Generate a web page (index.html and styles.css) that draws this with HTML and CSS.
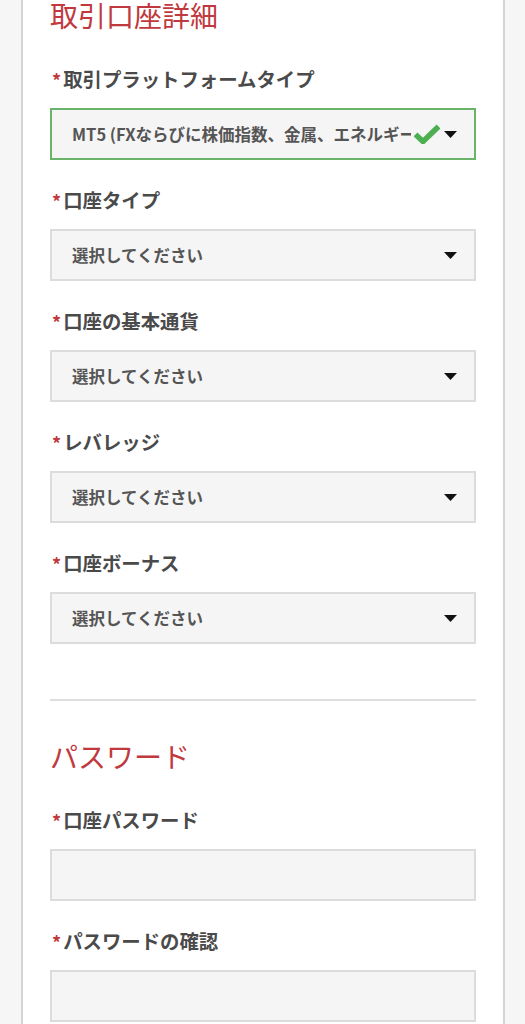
FILE: index.html
```html
<!DOCTYPE html>
<html lang="ja">
<head>
<meta charset="utf-8">
<title>取引口座詳細</title>
<link rel="stylesheet" href="styles.css">
</head>
<body>
<div class="card">
  <h2 class="section-title first">取引口座詳細</h2>

  <div class="field">
    <label class="label"><span class="req">*</span>取引プラットフォームタイプ</label>
    <div class="select valid">
      <span class="value">MT5 (FXならびに株価指数、金属、エネルギー、仮想通貨)</span>
      <svg class="check" viewBox="0 0 26 20" width="26" height="20"><path d="M1.5 10.5 L9 17.5 L24.5 2.5" fill="none" stroke="#4caf50" stroke-width="5.5"/></svg>
      <svg class="caret" viewBox="0 0 13 7" width="13" height="7"><path d="M0 0 H13 L6.5 7 Z" fill="#111"/></svg>
    </div>
  </div>

  <div class="field">
    <label class="label"><span class="req">*</span>口座タイプ</label>
    <div class="select">
      <span class="value">選択してください</span>
      <svg class="caret" viewBox="0 0 13 7" width="13" height="7"><path d="M0 0 H13 L6.5 7 Z" fill="#111"/></svg>
    </div>
  </div>

  <div class="field">
    <label class="label"><span class="req">*</span>口座の基本通貨</label>
    <div class="select">
      <span class="value">選択してください</span>
      <svg class="caret" viewBox="0 0 13 7" width="13" height="7"><path d="M0 0 H13 L6.5 7 Z" fill="#111"/></svg>
    </div>
  </div>

  <div class="field">
    <label class="label"><span class="req">*</span>レバレッジ</label>
    <div class="select">
      <span class="value">選択してください</span>
      <svg class="caret" viewBox="0 0 13 7" width="13" height="7"><path d="M0 0 H13 L6.5 7 Z" fill="#111"/></svg>
    </div>
  </div>

  <div class="field">
    <label class="label"><span class="req">*</span>口座ボーナス</label>
    <div class="select">
      <span class="value">選択してください</span>
      <svg class="caret" viewBox="0 0 13 7" width="13" height="7"><path d="M0 0 H13 L6.5 7 Z" fill="#111"/></svg>
    </div>
  </div>

  <hr class="divider">

  <h2 class="section-title">パスワード</h2>

  <div class="field">
    <label class="label"><span class="req">*</span>口座パスワード</label>
    <div class="input"></div>
  </div>

  <div class="field">
    <label class="label"><span class="req">*</span>パスワードの確認</label>
    <div class="input"></div>
  </div>
</div>
</body>
</html>
```

FILE: styles.css
```css
html, body {
  margin: 0;
  padding: 0;
  background: #f6f6f6;
  font-family: "Noto Sans CJK JP", "Noto Sans", "Liberation Sans", sans-serif;
}

.card {
  margin-left: 21px;
  width: 426px;
  padding: 0 27px 40px;
  background: #fff;
  border-left: 2px solid #d4d4d4;
  border-right: 2px solid #d4d4d4;
  min-height: 1100px;
}

.section-title {
  margin: 0;
  font-size: 28px;
  line-height: 38px;
  font-weight: 400;
  color: #c0393e;
}

.section-title.first {
  margin-top: -4px;
}

.field {
  display: flex;
  flex-direction: column;
}

.label {
  display: flex;
  align-items: center;
  height: 26px;
  margin-top: 27px;
  margin-bottom: 16px;
  font-size: 19.4px;
  line-height: 26px;
  font-weight: 700;
  color: #4a4a4a;
  white-space: nowrap;
}

.section-title + .field .label {
  margin-top: 32px;
}

.req {
  color: #c0393e;
  font-size: 18px;
  line-height: 1;
  margin-left: 2px;
  margin-right: 2px;
  position: relative;
  top: 1px;
}

.select,
.input {
  box-sizing: border-box;
  height: 52px;
  background: #f5f5f5;
  border: 2px solid #dcdcdc;
}

.select {
  display: flex;
  align-items: center;
  padding: 0 17px 0 20px;
}

.select.valid {
  border-color: #6ab46a;
}

.value {
  flex: 1;
  min-width: 0;
  overflow: hidden;
  white-space: nowrap;
  font-size: 16.5px;
  font-weight: 700;
  color: #555;
}

.check {
  flex: none;
  margin-left: 3px;
}

.caret {
  flex: none;
  margin-left: 4px;
}

.divider {
  margin: 55px 0 0;
  border: 0;
  height: 2px;
  background: #dedede;
}

.divider + .section-title {
  margin-top: 36px;
}
```
